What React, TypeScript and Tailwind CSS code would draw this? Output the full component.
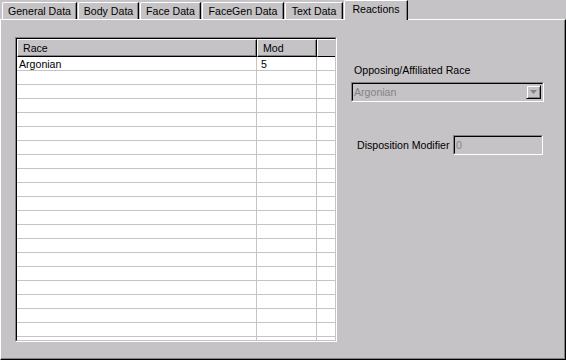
import React from "react";

const tabs = [
    { label: "General Data", w: 75 },
    { label: "Body Data", w: 61 },
    { label: "Face Data", w: 61 },
    { label: "FaceGen Data", w: 82 },
    { label: "Text Data", w: 58 },
];

const rows = Array.from({ length: 21 }, (_, i) => (i === 0 ? { race: "Argonian", mod: "5" } : { race: "", mod: "" }));

const App = () => {
    return (
        <div className="w-[566px] h-[360px] bg-[#c6c3c6] font-['Liberation_Sans',Arial,sans-serif] text-[10.6px] text-black overflow-hidden flex flex-col">
            {/* tab strip */}
            <div className="h-[19px] flex items-end pl-[2px] relative z-10">
                {tabs.map((t) => (
                    <div key={t.label} style={{ width: t.w }} className="h-[17px] mr-[1px] border-t border-l border-white border-r border-r-black rounded-tl-[2px] flex items-center justify-center leading-none shadow-[inset_-1px_0_0_#848284]">
                        {t.label}
                    </div>
                ))}
                <div className="w-[64px] h-[20px] -mb-[1px] bg-[#c6c3c6] border-t border-l border-white border-r border-r-black rounded-tl-[2px] flex items-start pt-[3px] justify-center leading-none shadow-[inset_-1px_0_0_#848284]">
                    Reactions
                </div>
            </div>

            {/* panel */}
            <div className="flex-1 border-t border-l border-white border-r border-b border-r-black border-b-black shadow-[inset_-1px_-1px_0_#848284] flex pl-[14px] pt-[17px]">
                {/* list */}
                <div className="w-[322px] h-[305px] border-t border-l border-[#848284] border-r border-b border-r-white border-b-white">
                    <div className="w-full h-full border-t border-l border-black border-r border-b border-r-[#c6c3c6] border-b-[#c6c3c6] bg-white overflow-hidden flex flex-col">
                        <div className="h-[18px] flex bg-[#c6c3c6] shrink-0">
                            <div className="w-[240px] border-t border-l border-white border-r border-b border-r-black border-b-black shadow-[inset_-1px_-1px_0_#848284] pl-[5px] pt-[1px] flex items-center leading-none">Race</div>
                            <div className="w-[60px] border-t border-l border-white border-r border-b border-r-black border-b-black shadow-[inset_-1px_-1px_0_#848284] pl-[5px] pt-[1px] flex items-center leading-none">Mod</div>
                            <div className="flex-1 border-t border-l border-white border-b border-b-black"></div>
                        </div>
                        {rows.map((r, key) => (
                            <div key={key} className="h-[14px] flex border-b border-[#c6c3c6] shrink-0">
                                <div className="w-[240px] border-r border-[#c6c3c6] pl-[2px] leading-[15px]">{r.race}</div>
                                <div className="w-[60px] border-r border-[#c6c3c6] pl-[4px] leading-[15px]">{r.mod}</div>
                                <div className="flex-1"></div>
                            </div>
                        ))}
                    </div>
                </div>

                {/* right side */}
                <div className="ml-[14px] pt-[27px] w-[193px] flex flex-col">
                    <div className="pl-[3px] leading-[13px]">Opposing/Affiliated Race</div>
                    <div className="mt-[5px] h-[20px] border-t border-l border-[#848284] border-r border-b border-r-white border-b-white">
                        <div className="h-full border-t border-l border-black border-r border-b border-r-[#c6c3c6] border-b-[#c6c3c6] flex items-center">
                            <div className="flex-1 pl-[1px] text-[#848284] leading-none">Argonian</div>
                            <div className="w-[15px] h-[14px] mr-[1px] border-t border-l border-[#c6c3c6] border-r border-b border-r-black border-b-black shadow-[inset_1px_1px_0_#ffffff,inset_-1px_-1px_0_#848284] flex items-center justify-center">
                                <svg width="7" height="4" viewBox="0 0 7 4"><path d="M0 0h7L3.5 4z" fill="#848284" /></svg>
                            </div>
                        </div>
                    </div>
                    <div className="mt-[33px] flex items-center">
                        <div className="pl-[6px] w-[102px] leading-[13px]">Disposition Modifier</div>
                        <div className="w-[90px] h-[20px] border-t border-l border-[#848284] border-r border-b border-r-white border-b-white">
                            <div className="h-full border-t border-l border-black border-r border-b border-r-[#c6c3c6] border-b-[#c6c3c6] flex items-center pl-[1px] text-[#848284] leading-none">0</div>
                        </div>
                    </div>
                </div>
            </div>
        </div>
    );
};

export default App;
